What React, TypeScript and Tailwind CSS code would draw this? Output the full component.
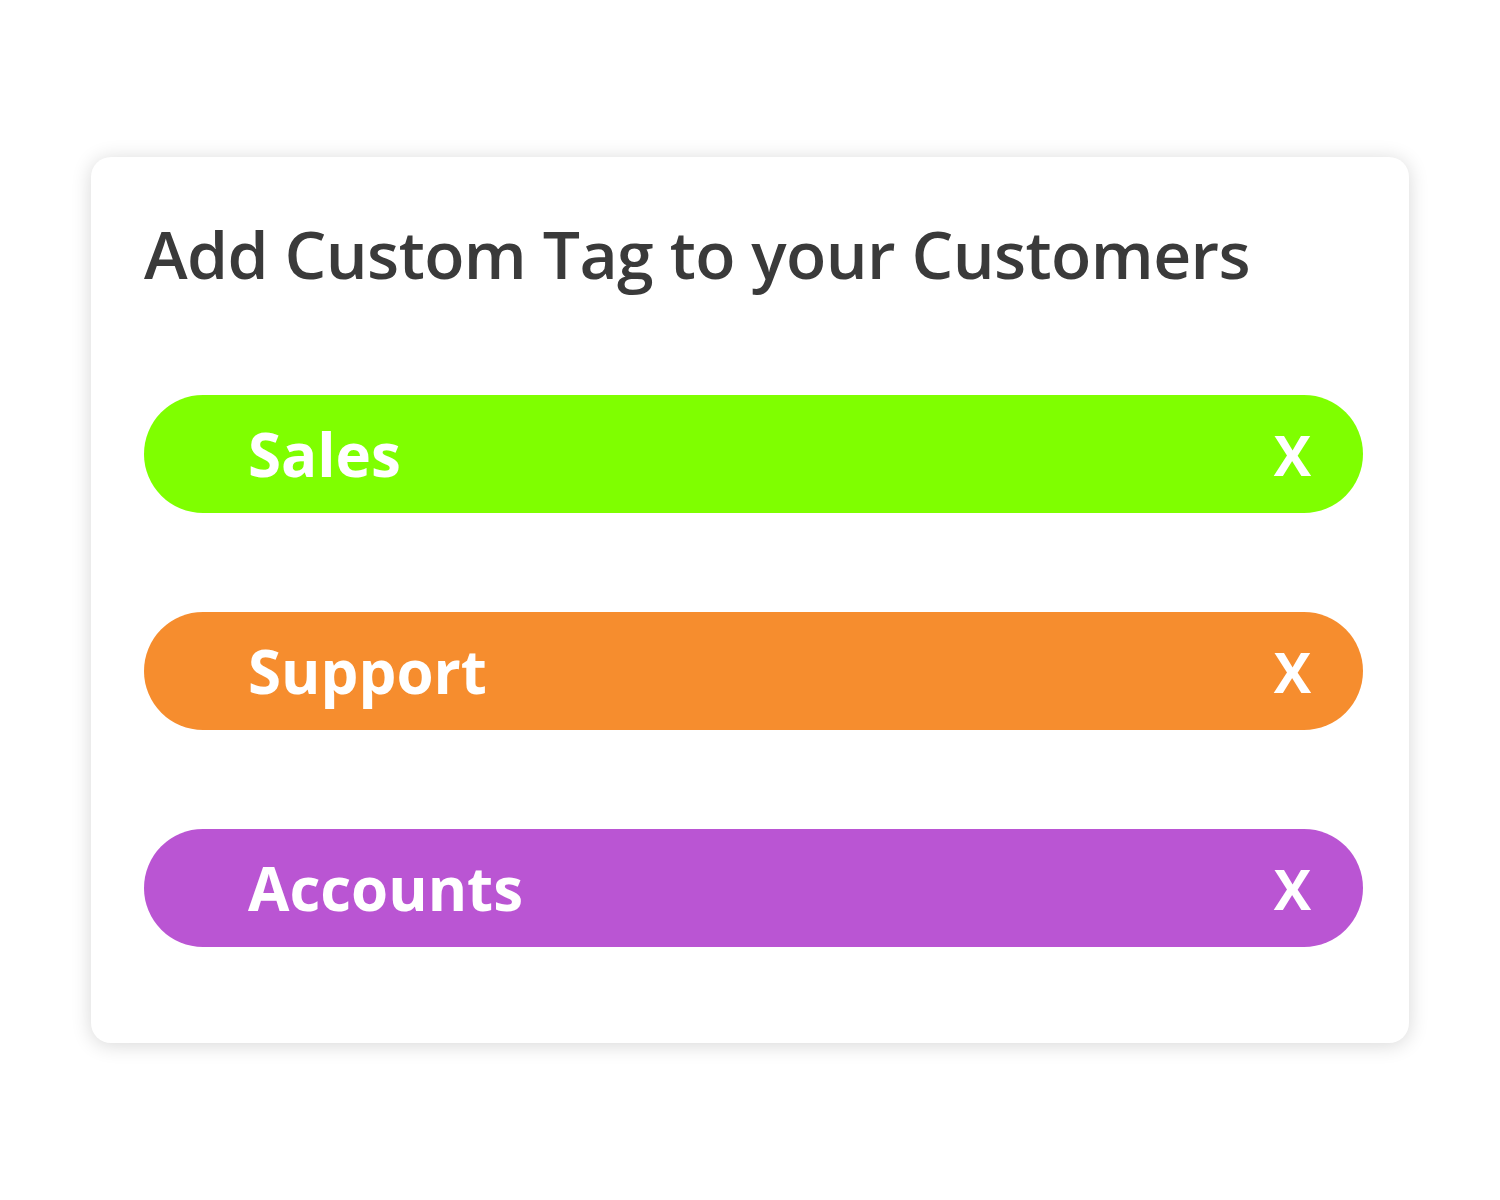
import React from "react";

type Tag = { name: string; color: string };

const tags: Tag[] = [
  { name: "Sales", color: "bg-[#7fff00]" },
  { name: "Support", color: "bg-[#f68d2e]" },
  { name: "Accounts", color: "bg-[#ba55d3]" },
];

const TagPill = ({ tag }: { tag: Tag }) => (
  <div
    className={`${tag.color} h-[118px] rounded-full flex items-center justify-between pl-[104px] pr-[52px] text-white font-bold`}
  >
    <span className="text-[60px] leading-none">{tag.name}</span>
    <span className="text-[56px] leading-none">X</span>
  </div>
);

const App = () => {
  return (
    <div className="w-[1500px] h-[1200px] bg-white pt-[157px] pl-[91px] font-['Open_Sans','Noto_Sans',sans-serif]">
      <div className="w-[1318px] h-[886px] bg-white rounded-[20px] shadow-[0_2px_20px_rgba(0,0,0,0.16)] pl-[53px] pr-[46px] pt-[63px]">
        <h1 className="text-[66px] leading-none text-[#3a3a3a] font-semibold tracking-[-0.6px]">
          Add Custom Tag to your Customers
        </h1>
        <div className="mt-[109px] flex flex-col gap-[99px]">
          {tags.map((tag) => (
            <TagPill key={tag.name} tag={tag} />
          ))}
        </div>
      </div>
    </div>
  );
};

export default App;
